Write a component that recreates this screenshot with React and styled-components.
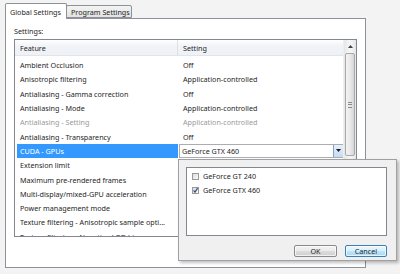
import React from 'react';
import styled, { createGlobalStyle } from 'styled-components';

const Global = createGlobalStyle`
  html, body { margin: 0; padding: 0; }
  body {
    width: 400px; height: 274px; overflow: hidden;
    background: #f3f3f3;
    font-family: "Noto Sans", "Open Sans", sans-serif;
    font-size: 7.2px;
    color: #262626;
  }
`;

const Window = styled.div`
  position: relative;
  width: 400px;
  height: 274px;
  box-sizing: border-box;
  padding: 3px 0 0 5px;
`;

const TabStrip = styled.div`
  display: flex;
  align-items: flex-end;
  height: 15px;
  position: relative;
  z-index: 1;
`;

const Tab = styled.div`
  box-sizing: border-box;
  width: ${p => p.$w}px;
  height: ${p => (p.$active ? '16px' : '13px')};
  margin-bottom: ${p => (p.$active ? '-1px' : '0')};
  margin-left: ${p => (p.$active ? '0' : '-1px')};
  padding-left: 4px;
  display: flex;
  align-items: center;
  border: 1px solid #8e9199;
  border-bottom: ${p => (p.$active ? 'none' : '1px solid #8e9199')};
  border-radius: 2px 2px 0 0;
  background: ${p => (p.$active ? '#ffffff' : 'linear-gradient(#f4f4f4, #e2e2e2)')};
  white-space: nowrap;
`;

const Panel = styled.div`
  box-sizing: border-box;
  width: 361px;
  height: 250px;
  border: 1px solid #8e9199;
  background: #ffffff;
  padding: 6px 0 0 8px;
`;

const Label = styled.div`
  height: 14px;
  line-height: 12px;
`;

const ListBox = styled.div`
  box-sizing: border-box;
  width: 343px;
  height: 198px;
  border: 1px solid #828790;
  display: grid;
  grid-template-columns: 1fr 13px;
  overflow: hidden;
`;

const ListMain = styled.div`
  overflow: hidden;
`;

const Header = styled.div`
  display: grid;
  grid-template-columns: 163px 1fr;
  height: 16px;
  background: linear-gradient(#ffffff, #f1f3f7 40%, #eef1f6);
  border-bottom: 1px solid #e1e4ea;
  box-sizing: border-box;
`;

const HeadCell = styled.div`
  display: flex;
  align-items: center;
  padding-left: 5px;
  border-right: ${p => (p.$divider ? '1px solid #dde0e6' : 'none')};
`;

const Rows = styled.div`
  padding-top: 2px;
`;

const Row = styled.div`
  display: grid;
  grid-template-columns: 163px 1fr;
  height: 14.3px;
`;

const Cell = styled.div`
  display: flex;
  align-items: center;
  padding-left: 3px;
  margin-left: 2px;
  white-space: nowrap;
  overflow: hidden;
  color: ${p => (p.$selected ? '#ffffff' : p.$disabled ? '#9a9a9a' : '#262626')};
  background: ${p => (p.$selected ? '#3399ff' : 'transparent')};
`;

const ValueCell = styled.div`
  display: flex;
  align-items: center;
  padding-left: 5px;
  white-space: nowrap;
  color: ${p => (p.$disabled ? '#9a9a9a' : '#262626')};
`;

const Combo = styled.div`
  box-sizing: border-box;
  height: 14.3px;
  margin-left: 1px;
  width: 165px;
  border: 1px solid #abadb3;
  background: #fff;
  display: flex;
  align-items: center;
`;

const ComboText = styled.div`
  flex: 1;
  padding-left: 2px;
  white-space: nowrap;
`;

const ComboButton = styled.div`
  width: 10px;
  height: 100%;
  box-sizing: border-box;
  border-left: 1px solid #7da2ce;
  background: linear-gradient(#e6f0fa, #c4dcf4);
  display: flex;
  align-items: center;
  justify-content: center;
`;

const ScrollBar = styled.div`
  display: flex;
  flex-direction: column;
  background: linear-gradient(90deg, #e6e6e6, #f4f4f4 40%, #f4f4f4 60%, #e6e6e6);
  border-left: 1px solid #eeeeee;
`;

const ScrollArrow = styled.div`
  height: 13px;
  display: flex;
  align-items: center;
  justify-content: center;
`;

const Thumb = styled.div`
  margin: 0 1px;
  height: 103px;
  box-sizing: border-box;
  border: 1px solid #a8a8a8;
  border-radius: 2px;
  background: linear-gradient(90deg, #f3f3f3, #e9e9e9 50%, #d6d6d6);
  display: flex;
  align-items: center;
  justify-content: center;
`;

const Grip = styled.div`
  width: 4px;
  height: 4px;
  border-top: 1px solid #8a8a8a;
  border-bottom: 1px solid #8a8a8a;
  position: relative;
  &::after {
    content: '';
    position: absolute;
    left: 0; right: 0; top: 1.5px;
    border-top: 1px solid #8a8a8a;
  }
`;

const Popup = styled.div`
  position: absolute;
  left: 178px;
  top: 159px;
  width: 219px;
  height: 102px;
  box-sizing: border-box;
  background: #f0f0f0;
  border: 1px solid #a0a0a0;
  box-shadow: 2px 2px 3px rgba(0, 0, 0, 0.25);
  padding: 7px 9px 3px 7px;
  display: flex;
  flex-direction: column;
  z-index: 5;
`;

const CheckList = styled.div`
  height: 70px;
  box-sizing: border-box;
  border: 1px solid #828790;
  background: #fff;
  padding: 1px 0 0 5px;
`;

const CheckItem = styled.div`
  height: 14px;
  display: flex;
  align-items: center;
  gap: 4px;
  white-space: nowrap;
`;

const Box = styled.div`
  width: 7px;
  height: 7px;
  flex: none;
  box-sizing: border-box;
  border: 1px solid #9a9a9a;
  background: linear-gradient(135deg, #dcdcdc, #fafafa);
  position: relative;
`;

const Tick = styled.svg`
  position: absolute;
  left: -1px;
  top: -1px;
`;

const Buttons = styled.div`
  margin-top: 9px;
  display: flex;
  justify-content: flex-end;
  gap: 8px;
`;

const Button = styled.div`
  width: ${p => p.$w}px;
  height: 12px;
  box-sizing: border-box;
  border: 1px solid ${p => (p.$focus ? '#3c7fb1' : '#8a8a8a')};
  border-radius: 2px;
  background: ${p =>
    p.$focus
      ? 'linear-gradient(#eaf6fd, #d9f0fc 50%, #bee6fd 50%, #a7d9f5)'
      : 'linear-gradient(#f2f2f2, #ebebeb 50%, #dddddd 50%, #cfcfcf)'};
  box-shadow: inset 0 0 0 1px rgba(255, 255, 255, 0.7);
  display: flex;
  align-items: center;
  justify-content: center;
`;

// Values of the rows below the selected one are hidden by the open dropdown.
const rows = [
  ['Ambient Occlusion', 'Off'],
  ['Anisotropic filtering', 'Application-controlled'],
  ['Antialiasing - Gamma correction', 'Off'],
  ['Antialiasing - Mode', 'Application-controlled'],
  ['Antialiasing - Setting', 'Application-controlled', 'disabled'],
  ['Antialiasing - Transparency', 'Off'],
  ['CUDA - GPUs', 'GeForce GTX 460', 'selected'],
  ['Extension limit', ''],
  ['Maximum pre-rendered frames', ''],
  ['Multi-display/mixed-GPU acceleration', ''],
  ['Power management mode', ''],
  ['Texture filtering - Anisotropic sample opti...', ''],
  ['Texture filtering - Negative LOD bias', ''],
];

export default function App() {
  return (
    <>
      <Global />
      <Window>
        <TabStrip>
          <Tab $active $w={62}>Global Settings</Tab>
          <Tab $w={66}>Program Settings</Tab>
        </TabStrip>
        <Panel>
          <Label>Settings:</Label>
          <ListBox>
            <ListMain>
              <Header>
                <HeadCell $divider>Feature</HeadCell>
                <HeadCell>Setting</HeadCell>
              </Header>
              <Rows>
                {rows.map(([f, v, state]) => (
                  <Row key={f}>
                    <Cell $selected={state === 'selected'} $disabled={state === 'disabled'}>
                      {f}
                    </Cell>
                    {state === 'selected' ? (
                      <Combo>
                        <ComboText>{v}</ComboText>
                        <ComboButton>
                          <svg width="5" height="3" viewBox="0 0 5 3">
                            <path d="M0 0h5L2.5 3z" fill="#1a1a1a" />
                          </svg>
                        </ComboButton>
                      </Combo>
                    ) : (
                      <ValueCell $disabled={state === 'disabled'}>{v}</ValueCell>
                    )}
                  </Row>
                ))}
              </Rows>
            </ListMain>
            <ScrollBar>
              <ScrollArrow>
                <svg width="5" height="3" viewBox="0 0 5 3">
                  <path d="M0 3h5L2.5 0z" fill="#404040" />
                </svg>
              </ScrollArrow>
              <Thumb>
                <Grip />
              </Thumb>
            </ScrollBar>
          </ListBox>
        </Panel>
        <Popup>
          <CheckList>
            <CheckItem>
              <Box />
              <span>GeForce GT 240</span>
            </CheckItem>
            <CheckItem>
              <Box>
                <Tick width="7" height="7" viewBox="0 0 7 7">
                  <path d="M1.6 3.4 L3 5.2 L5.6 1.2" stroke="#3a4f8a" strokeWidth="1.2" fill="none" />
                </Tick>
              </Box>
              <span>GeForce GTX 460</span>
            </CheckItem>
          </CheckList>
          <Buttons>
            <Button $w={43}>OK</Button>
            <Button $w={42} $focus>Cancel</Button>
          </Buttons>
        </Popup>
      </Window>
    </>
  );
}
